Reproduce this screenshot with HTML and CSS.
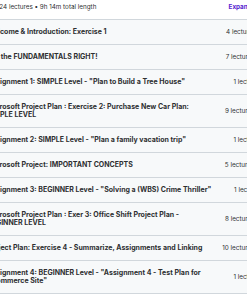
FILE: index.html
```html
<!DOCTYPE html>
<html>
<head>
<meta charset="utf-8">
<link rel="stylesheet" href="styles.css">
</head>
<body>
<div class="curriculum">
  <div class="summary">
    <span class="stats">13 sections • 24 lectures • 9h 14m total length</span>
    <span class="expand">Expand all sections</span>
  </div>
  <div class="sections">
    <div class="section"><span class="title">Welcome &amp; Introduction: Exercise 1</span><span class="meta">4 lectures • 15min</span></div>
    <div class="section"><span class="title">Get the FUNDAMENTALS RIGHT!</span><span class="meta">7 lectures • 47min</span></div>
    <div class="section"><span class="title">Assignment 1: SIMPLE Level - "Plan to Build a Tree House"</span><span class="meta">1 lecture • 9min</span></div>
    <div class="section"><span class="title">Microsoft Project Plan : Exercise 2: Purchase New Car Plan: SIMPLE LEVEL</span><span class="meta">9 lectures • 58min</span></div>
    <div class="section"><span class="title">Assignment 2: SIMPLE Level - "Plan a family vacation trip"</span><span class="meta">1 lecture • 8min</span></div>
    <div class="section"><span class="title">Microsoft Project: IMPORTANT CONCEPTS</span><span class="meta">5 lectures • 42min</span></div>
    <div class="section"><span class="title">Assignment 3: BEGINNER Level - "Solving a (WBS) Crime Thriller"</span><span class="meta">1 lecture • 7min</span></div>
    <div class="section"><span class="title">Microsoft Project Plan : Exer 3: Office Shift Project Plan - BEGINNER LEVEL</span><span class="meta">8 lectures • 55min</span></div>
    <div class="section"><span class="title">Project Plan: Exercise 4 - Summarize, Assignments and Linking</span><span class="meta">10 lectures • 58min</span></div>
    <div class="section"><span class="title">Assignment 4: BEGINNER Level - "Assignment 4 - Test Plan for eCommerce Site"</span><span class="meta">1 lecture • 6min</span></div>
  </div>
</div>
</body>
</html>
```
FILE: styles.css
```css
html, body {
  margin: 0;
  padding: 0;
  overflow: hidden;
  background: #ffffff;
}
body {
  font-family: Inter, "Liberation Sans", sans-serif;
  color: #2d2f31;
}
.curriculum {
  width: 340px;
  margin-left: -45px;
}
.summary {
  display: flex;
  justify-content: space-between;
  align-items: flex-start;
  height: 19px;
  box-sizing: border-box;
  padding: 3px 7px 0 4px;
  font-size: 6.3px;
  line-height: 9px;
}
.expand {
  font-weight: 700;
  color: #5624d0;
}
.sections {
  border-top: 1px solid #d1d7dc;
}
.section {
  display: flex;
  align-items: center;
  padding: 8px 15px 8px 32px;
  background: #f7f9fa;
  border-bottom: 1px solid #d1d7dc;
}
.title {
  flex: 0 0 229px;
  font-size: 7px;
  line-height: 8px;
  font-weight: 700;
}
.meta {
  flex: 1;
  text-align: right;
  font-size: 6.3px;
  line-height: 8px;
  white-space: nowrap;
}
```
